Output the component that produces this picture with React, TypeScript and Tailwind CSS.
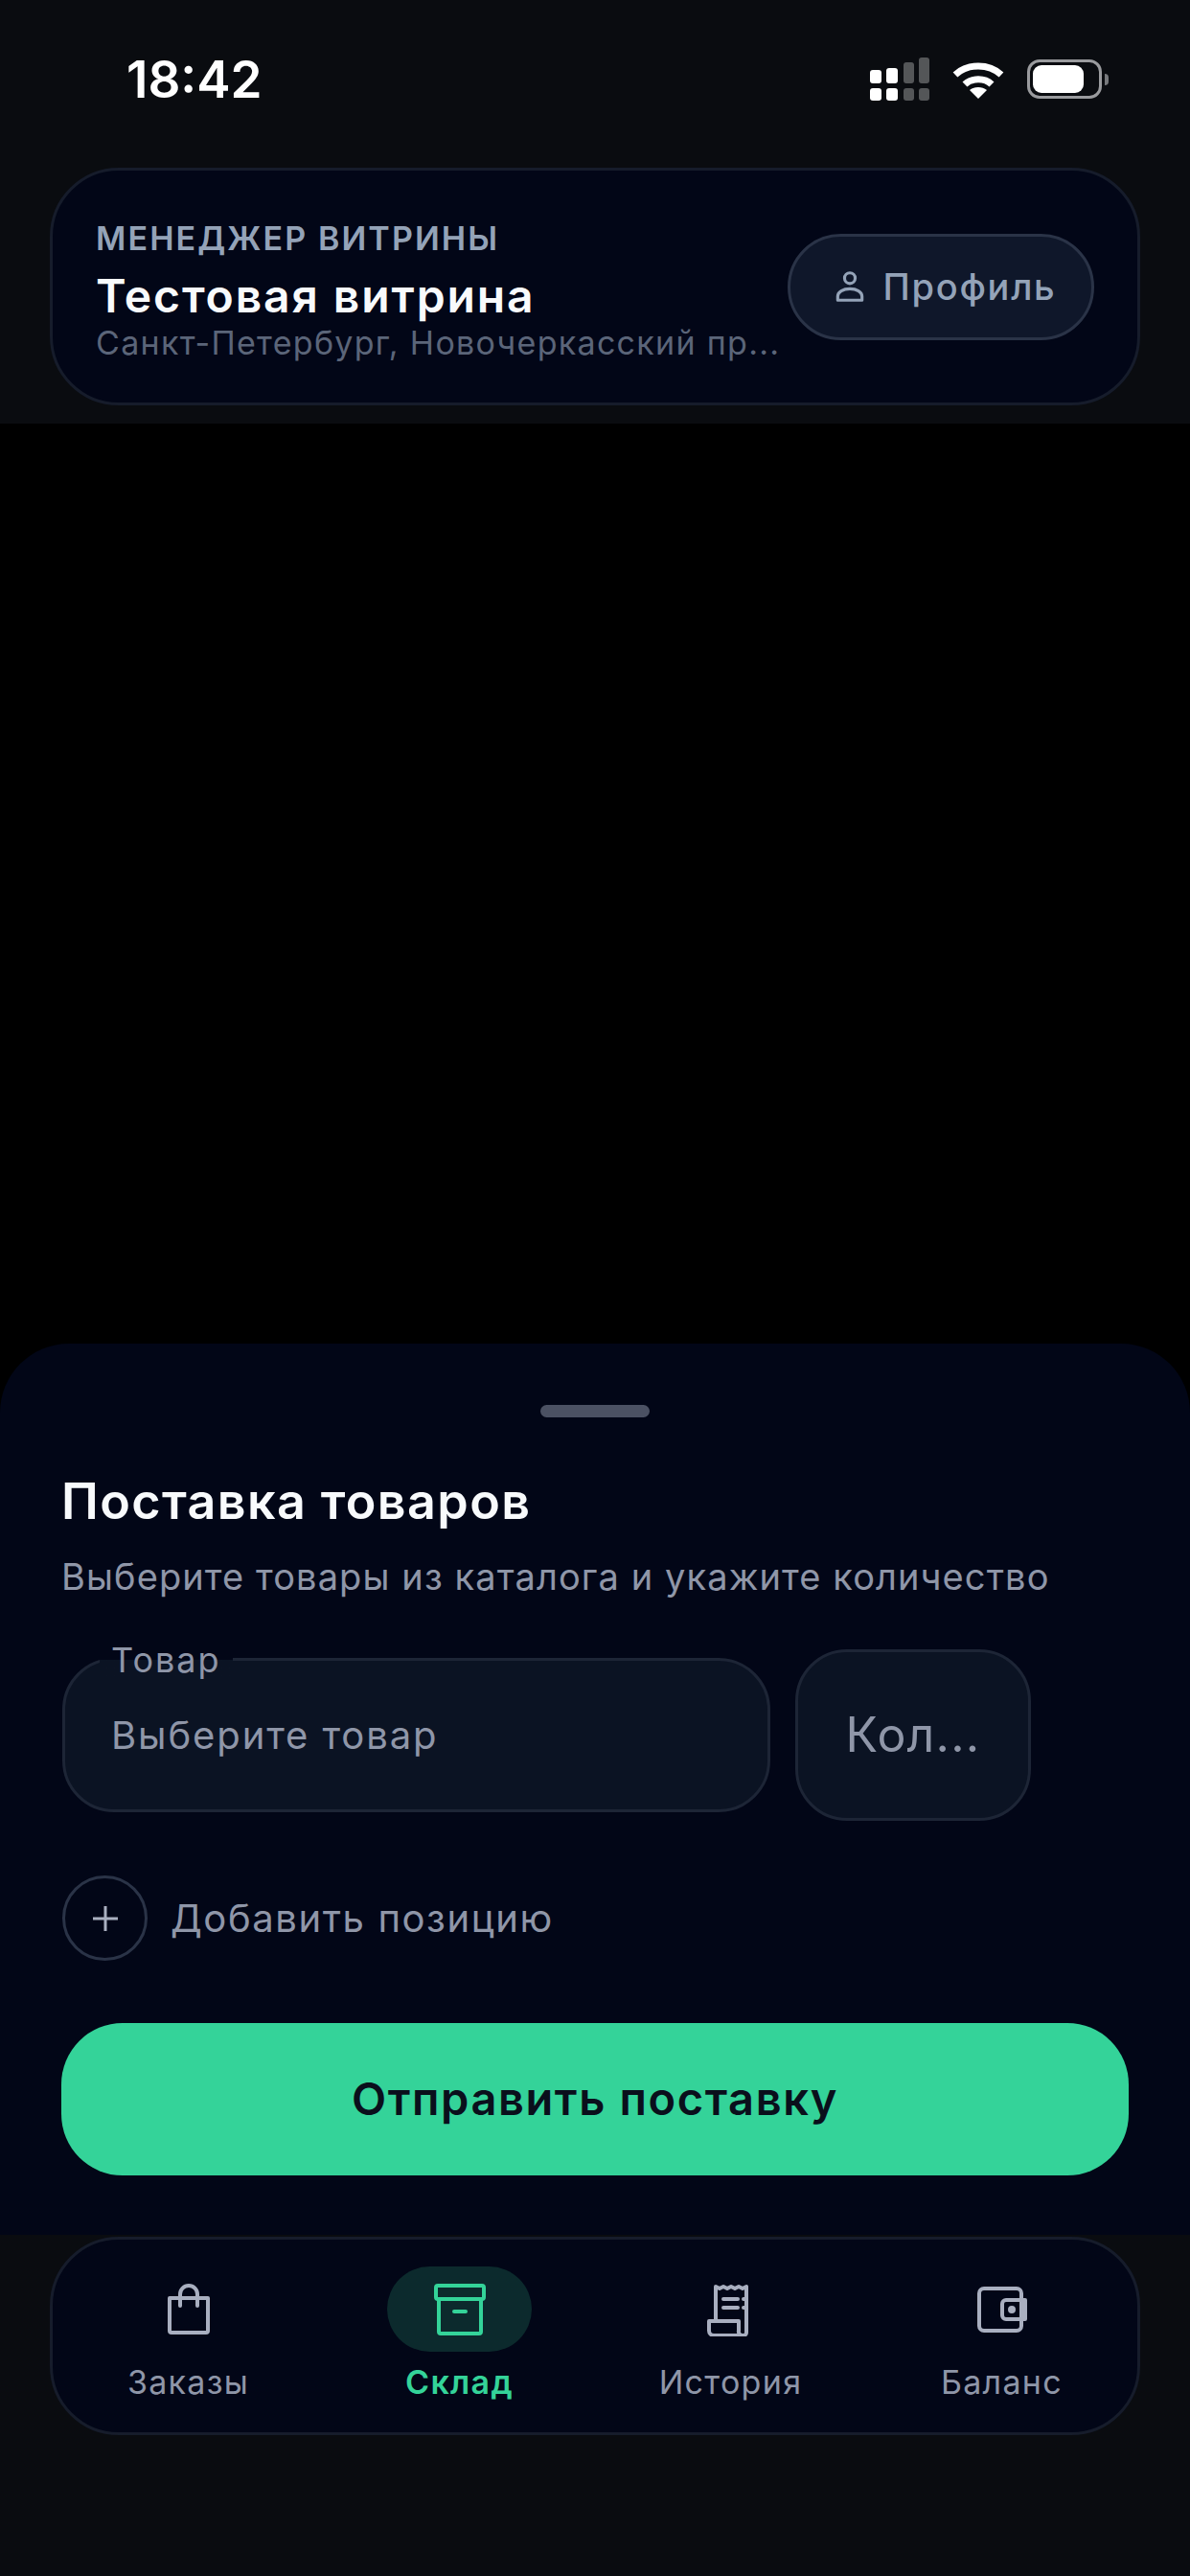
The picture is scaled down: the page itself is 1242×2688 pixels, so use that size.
import React from 'react';

const font = { fontFamily: 'Inter, "Noto Sans", sans-serif' };

const SignalIcon = () => (
  <svg width="62" height="45" viewBox="0 0 62 45" fill="#fff">
    <rect x="0" y="13" width="12" height="14" rx="3" />
    <rect x="17" y="11" width="12" height="16" rx="3" />
    <rect x="0" y="32" width="12" height="13" rx="3" />
    <rect x="17" y="32" width="12" height="13" rx="3" />
    <g opacity="0.3">
      <rect x="35" y="5" width="11" height="22" rx="3" />
      <rect x="51" y="0" width="11" height="27" rx="3" />
      <rect x="35" y="32" width="11" height="13" rx="3" />
      <rect x="51" y="32" width="11" height="13" rx="3" />
    </g>
  </svg>
);

const WifiIcon = () => (
  <svg width="54" height="40" viewBox="0 0 54 40" fill="none" stroke="#fff" strokeWidth="7">
    <path d="M3 15C16 3 38 3 51 15" />
    <path d="M13 25C20 18 34 18 41 25" />
    <path d="M27 40L18 31C23 27 31 27 36 31Z" fill="#fff" stroke="none" />
  </svg>
);

const BatteryIcon = () => (
  <div className="flex items-center gap-[3px]">
    <div className="flex h-[41px] w-[78px] items-center rounded-[13px] border-[3px] border-[#9a9b9e] p-[3px]">
      <div className="h-[29px] w-[53px] rounded-[9px] bg-white" />
    </div>
    <div className="h-[12px] w-[4px] rounded-r-full bg-[#77797c]" />
  </div>
);

const UserIcon = () => (
  <svg width="38" height="38" viewBox="0 0 24 24" fill="none" stroke="#94a3b8" strokeWidth="2" strokeLinejoin="round">
    <circle cx="12" cy="6.5" r="3.5" />
    <path d="M4 21v-2.5C4 15.5 7.5 13.5 12 13.5s8 2 8 5V21Z" />
  </svg>
);

const BagIcon = () => (
  <svg width="46" height="54" viewBox="0 0 46 54" fill="none" stroke="#a9afc0" strokeWidth="4" strokeLinejoin="round" strokeLinecap="round">
    <path d="M3 15h40v34a2 2 0 0 1-2 2H5a2 2 0 0 1-2-2Z" />
    <path d="M14 23V11a9 9 0 0 1 18 0v12" />
  </svg>
);

const BoxIcon = () => (
  <svg width="54" height="54" viewBox="0 0 54 54" fill="none" stroke="#34d399" strokeWidth="4" strokeLinejoin="round" strokeLinecap="round">
    <rect x="2" y="2" width="50" height="14" rx="2" />
    <path d="M5 16v34a2 2 0 0 0 2 2h40a2 2 0 0 0 2-2V16" />
    <path d="M21 29h12" />
  </svg>
);

const ReceiptIcon = () => (
  <svg width="50" height="56" viewBox="0 0 50 56" fill="none" stroke="#a9afc0" strokeWidth="4" strokeLinejoin="round" strokeLinecap="round">
    <path d="M9 40V4l4 2 4-2 4 2 4-2 4 2 4-2 4 2 4-2v48a3 3 0 0 1-3 3H7" />
    <path d="M2 40h31v10a4 4 0 0 0 4 5H7a5 5 0 0 1-5-5Z" />
    <path d="M17 17h15M17 26h15M38 17h1M38 26h1" />
  </svg>
);

const WalletIcon = () => (
  <svg width="52" height="50" viewBox="0 0 52 50" fill="none" stroke="#a9afc0" strokeWidth="4" strokeLinejoin="round">
    <rect x="2" y="3" width="44" height="44" rx="5" />
    <path d="M50 15H30a4 4 0 0 0-4 4v12a4 4 0 0 0 4 4h20Z" />
    <circle cx="36" cy="25" r="2" fill="#a9afc0" />
  </svg>
);

const tabs = [
  { label: 'Заказы', icon: <BagIcon />, active: false },
  { label: 'Склад', icon: <BoxIcon />, active: true },
  { label: 'История', icon: <ReceiptIcon />, active: false },
  { label: 'Баланс', icon: <WalletIcon />, active: false },
];

export default function App() {
  return (
    <div className="flex h-[2688px] w-[1242px] flex-col overflow-hidden bg-black" style={font}>
      {/* header */}
      <div className="h-[442px] bg-[#0a0c10] px-[52px]">
        <div className="flex h-[175px] items-start justify-between pl-[80px] pr-[33px] pt-[56px]">
          <span className="text-[53px] leading-[54px] font-semibold text-white">18:42</span>
          <div className="flex items-center gap-[24px] pt-[4px]">
            <SignalIcon />
            <WifiIcon />
            <BatteryIcon />
          </div>
        </div>
        <div className="flex h-[248px] items-center justify-between rounded-[72px] border-[3px] border-[#161c2b] bg-[#020617] px-[45px]">
          <div className="flex min-w-0 flex-col pt-[8px]">
            <span className="text-[34px] leading-[40px] font-semibold tracking-[2.1px] text-[#94a3b8]">МЕНЕДЖЕР ВИТРИНЫ</span>
            <span className="mt-[12px] text-[48px] leading-[56px] font-semibold tracking-[1.9px] text-[#f8fafc]">Тестовая витрина</span>
            <span className="mt-[2px] whitespace-nowrap text-[34px] leading-[38px] tracking-[1.3px] text-[#5b6579]">Санкт-Петербург, Новочеркасский пр...</span>
          </div>
          <button className="flex h-[111px] w-[320px] shrink-0 items-center justify-center gap-[16px] rounded-full border-[3px] border-[#2a3347] bg-[#0f172a] pl-[6px] text-[38px] font-medium tracking-[1.7px] text-[#94a3b8]">
            <UserIcon />
            Профиль
          </button>
        </div>
      </div>

      {/* backdrop */}
      <div className="flex-1 bg-black" />

      {/* delivery sheet */}
      <div className="flex h-[930px] flex-col rounded-t-[72px] bg-[#020617] pl-[64px] pr-[64px] pt-[64px]">
        <div className="mx-auto h-[13px] w-[114px] rounded-full bg-[#4b5163]" />
        <h2 className="mt-[58px] text-[52px] leading-[60px] font-semibold tracking-[1.4px] text-[#f8fafc]">Поставка товаров</h2>
        <p className="mt-[24px] text-[38px] leading-[48px] tracking-[1.1px] text-[#8f96a8]">Выберите товары из каталога и укажите количество</p>
        <div className="mt-[52px] flex items-start gap-[26px] pl-[1px]">
          <div className="relative mt-[9px] flex h-[161px] w-[739px] items-center rounded-[54px] border-[3px] border-[#1d2536] bg-[#0b1323] px-[48px]">
            <span className="absolute left-[36px] top-[-23px] bg-gradient-to-b from-[#020617] from-50% to-[#0b1323] to-50% px-[12px] text-[36px] leading-[44px] tracking-[2px] text-[#8f96a8]">Товар</span>
            <span className="text-[40px] tracking-[1.9px] text-[#8f96a8]">Выберите товар</span>
          </div>
          <div className="flex h-[179px] w-[246px] items-center justify-center rounded-[54px] border-[3px] border-[#1d2536] bg-[#0b1323] text-[50px] tracking-[1.2px] text-[#8f96a8]">
            Кол...
          </div>
        </div>
        <div className="mt-[57px] flex items-center gap-[24px] pl-[1px]">
          <div className="flex h-[89px] w-[89px] items-center justify-center rounded-full border-[3px] border-[#2a3347]">
            <svg width="32" height="32" viewBox="0 0 32 32" stroke="#a9afc0" strokeWidth="3"><path d="M16 3v26M3 16h26" /></svg>
          </div>
          <span className="text-[40px] tracking-[1.6px] text-[#8f96a8]">Добавить позицию</span>
        </div>
        <button className="mt-[65px] h-[159px] w-full shrink-0 rounded-[64px] bg-[#34d399] text-[47px] font-semibold tracking-[1.6px] text-[#0a0f1c]">
          Отправить поставку
        </button>
      </div>

      {/* bottom nav */}
      <div className="h-[356px] bg-[#0a0c10] px-[52px] pt-[2px]">
        <div className="grid h-[207px] grid-cols-4 rounded-[72px] border-[3px] border-[#161c2b] bg-[#020617] pt-[28px]">
          {tabs.map(t => (
            <div key={t.label} className="flex flex-col items-center">
              <div className={`flex h-[89px] w-[151px] items-center justify-center rounded-[45px] ${t.active ? 'bg-[#0c2a2d]' : ''}`}>
                {t.icon}
              </div>
              <span className={`mt-[11px] text-[34px] leading-[42px] tracking-[1.3px] ${t.active ? 'font-semibold text-[#34d399]' : 'text-[#8f96a8]'}`}>{t.label}</span>
            </div>
          ))}
        </div>
      </div>
    </div>
  );
}
